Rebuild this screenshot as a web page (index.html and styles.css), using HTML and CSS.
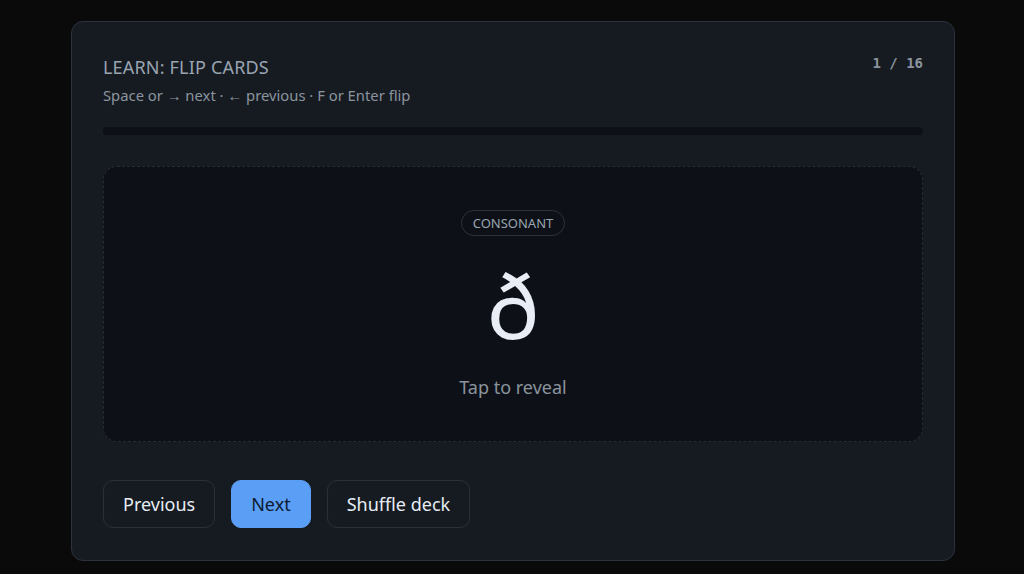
FILE: index.html
```html
<!DOCTYPE html>
<html lang="en">
<head>
<meta charset="utf-8">
<title>Learn: Flip Cards</title>
<link rel="stylesheet" href="styles.css">
</head>
<body>
<main class="panel">
  <header class="head">
    <div class="head-text">
      <h1 class="title">LEARN: FLIP CARDS</h1>
      <p class="hint">Space or → next · ← previous · F or Enter flip</p>
    </div>
    <div class="counter">1 / 16</div>
  </header>
  <div class="progress"><div class="progress-fill" style="width:6.25%"></div></div>
  <section class="card">
    <span class="badge">CONSONANT</span>
    <div class="glyph">ð</div>
    <div class="reveal">Tap to reveal</div>
  </section>
  <div class="actions">
    <button class="btn">Previous</button>
    <button class="btn btn-primary">Next</button>
    <button class="btn">Shuffle deck</button>
  </div>
</main>
</body>
</html>
```

FILE: styles.css
```css
* { box-sizing: border-box; }
html, body { margin: 0; padding: 0; }
body {
  background: #0a0a0a;
  font-family: "Noto Sans", "Open Sans", sans-serif;
  color: #e6edf3;
  padding: 21px 70px 14px 71px;
}
.panel {
  width: 884px;
  height: 540px;
  background: #161b22;
  border: 1px solid #2b323d;
  border-radius: 12px;
  padding: 31px 31px 31px 31px;
  display: flex;
  flex-direction: column;
}
.head {
  display: flex;
  justify-content: space-between;
  align-items: flex-start;
}
.title {
  margin: 0;
  font-size: 18px;
  font-weight: 400;
  line-height: 28px;
  color: #9aa4b1;
  letter-spacing: 0.01em;
}
.hint {
  margin: 3px 0 0;
  font-size: 14.8px;
  line-height: 22px;
  color: #8b949e;
}
.counter {
  font-family: "DejaVu Sans Mono", monospace;
  font-size: 14px;
  font-weight: 700;
  color: #8b949e;
  margin-top: 2px;
  white-space: pre;
}
.progress {
  margin-top: 21px;
  height: 8px;
  border-radius: 4px;
  background: #0d1117;
  overflow: hidden;
}
.progress-fill { height: 100%; background: #0d1117; }
.card {
  margin-top: 31px;
  height: 276px;
  background: #0d1117;
  border: 1px dashed #262c35;
  border-radius: 14px;
  display: flex;
  flex-direction: column;
  align-items: center;
  justify-content: center;
}
.badge {
  font-size: 13px;
  line-height: 24px;
  padding: 0 11px;
  border: 1px solid #2b323c;
  border-radius: 999px;
  color: #9aa4b1;
}
.glyph {
  margin-top: 14px;
  font-size: 88px;
  line-height: 110px;
  color: #e9edf5;
}
.reveal {
  margin-top: 15px;
  font-size: 18px;
  line-height: 24px;
  color: #8b949e;
}
.actions {
  margin-top: 38px;
  display: flex;
  gap: 16px;
}
.btn {
  font-family: inherit;
  font-size: 18px;
  height: 48px;
  padding: 0 19px;
  background: #161b22;
  color: #e6edf3;
  border: 1px solid #2a3039;
  border-radius: 10px;
}
.btn-primary {
  background: #5b9ef6;
  border-color: #5b9ef6;
  color: #0d1b33;
}
```
